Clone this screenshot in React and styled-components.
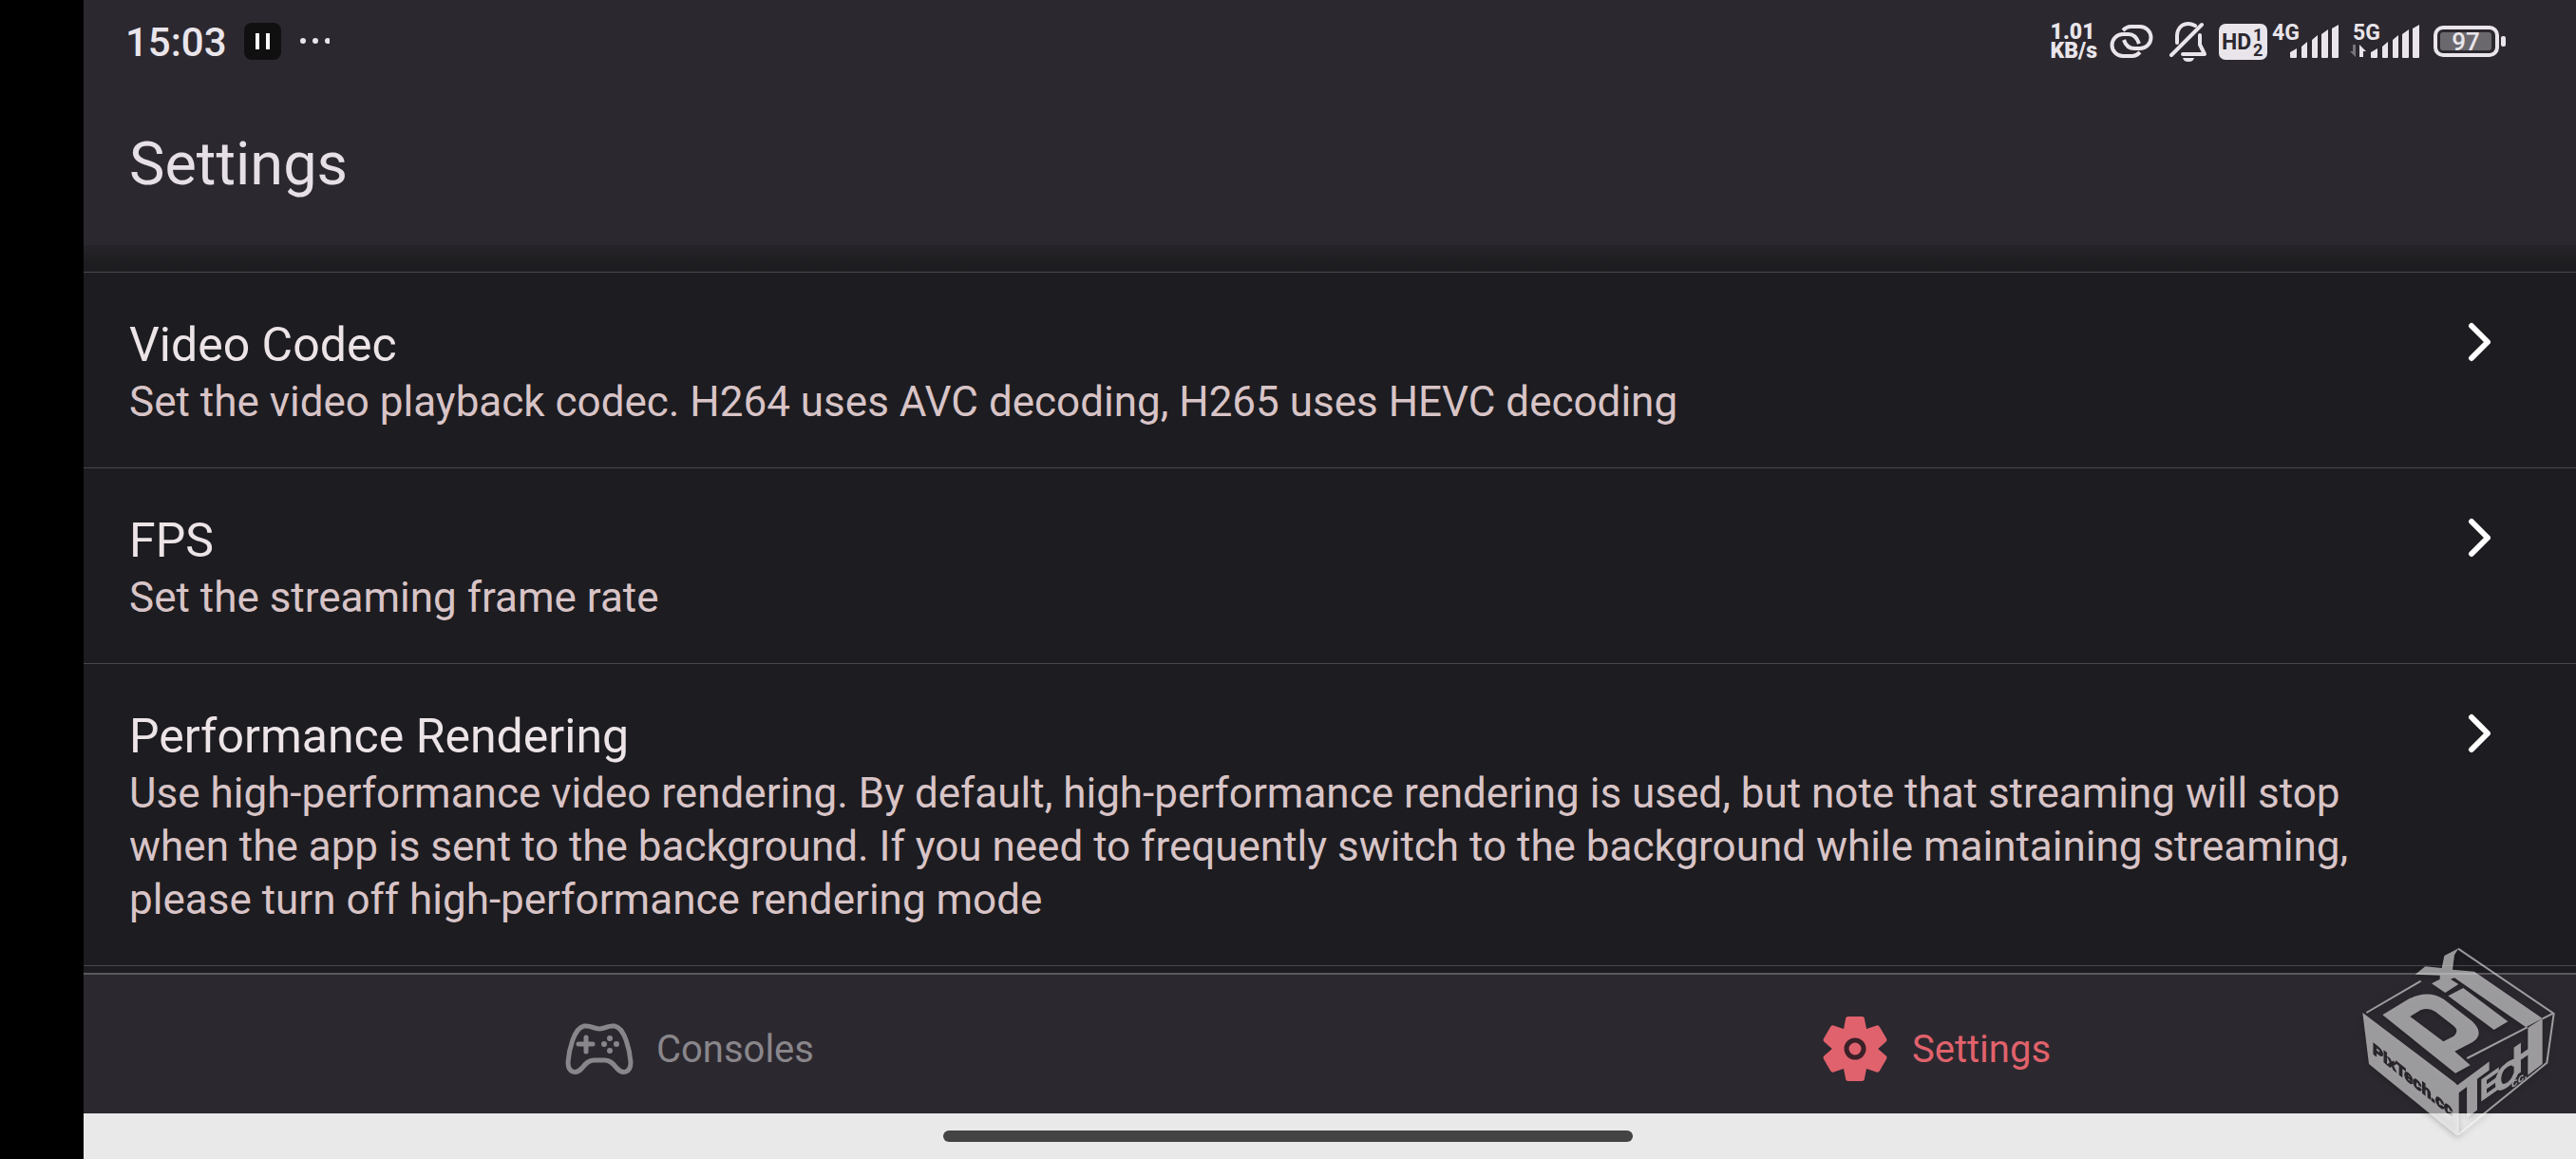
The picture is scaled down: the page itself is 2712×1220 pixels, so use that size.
import React from "react";
import styled, { createGlobalStyle } from "styled-components";

const settings = [
  {
    title: "Video Codec",
    text: "Set the video playback codec. H264 uses AVC decoding, H265 uses HEVC decoding",
  },
  { title: "FPS", text: "Set the streaming frame rate" },
  {
    title: "Performance Rendering",
    text: "Use high-performance video rendering. By default, high-performance rendering is used, but note that streaming will stop when the app is sent to the background. If you need to frequently switch to the background while maintaining streaming, please turn off high-performance rendering mode",
  },
];

function App() {
  return (
    <Screen>
      <GlobalStyle />
      <TopBar>
        <StatusBar />
        <PageTitle>Settings</PageTitle>
      </TopBar>
      <List>
        {settings.map((item) => (
          <li key={item.title}>
            <Row type="button">
              <RowText>
                <RowTitle>{item.title}</RowTitle>
                <RowDescription>{item.text}</RowDescription>
              </RowText>
              <Chevron />
            </Row>
          </li>
        ))}
      </List>
      <TabBar>
        <Tab href="#consoles">
          <GamepadIcon />
          Consoles
        </Tab>
        <Tab href="#settings" $active aria-current="page">
          <GearIcon />
          Settings
        </Tab>
      </TabBar>
      <HomeArea>
        <HomeHandle />
      </HomeArea>
      <Watermark />
    </Screen>
  );
}

function StatusBar() {
  return (
    <Status>
      <Clock>15:03</Clock>
      <svg width="90" height="40" viewBox="0 0 90 40">
        <rect x="0" y="0" width="39" height="39" rx="8" fill="#101010" />
        <path d="M12 11h4v17h-4zM23 11h4v17h-4z" fill="#fff" />
        <g fill="#e9e5eb">
          <circle cx="62" cy="19" r="3" />
          <circle cx="75" cy="19" r="3" />
          <circle cx="88" cy="19" r="3" />
        </g>
      </svg>
      <StatusIcons>
        <Speed>
          <span>1.01</span>
          <span>KB/s</span>
        </Speed>
        <LinkIcon />
        <BellOffIcon />
        <HdBadge />
        <Signal label="4G" />
        <Signal label="5G" arrows />
        <Battery />
      </StatusIcons>
    </Status>
  );
}

function LinkIcon() {
  return (
    <IconSlot $gap={13}>
      <svg width="46" height="36" viewBox="0 0 46 36" fill="none" stroke="#e9e5eb" strokeWidth="4">
        <path d="M14 6C17 3 19 2 22 2h10a11.500 11.500 0 0 1 0 23h-6c-6 0-9-3-11-9" />
        <path d="M32 29c-3 3-5 4-8 4H14a11.500 11.500 0 0 1 0-23h6c6 0 9 4 11 10" />
      </svg>
    </IconSlot>
  );
}

function BellOffIcon() {
  return (
    <IconSlot $gap={17}>
      <svg width="40" height="42" viewBox="0 0 40 42" fill="none" stroke="#e9e5eb" strokeWidth="4" strokeLinecap="round" strokeLinejoin="round">
        <path d="M2 35L34 3" />
        <path d="M8 22v-7C8 7 13 2 20 2c3 0 5 1 7 2" />
        <path d="M32 14v10l5 10H14" />
        <path d="M14 38h12c-1 3-3 4-6 4s-5-1-6-4z" fill="#e9e5eb" stroke="none" />
      </svg>
    </IconSlot>
  );
}

function HdBadge() {
  return (
    <IconSlot $gap={12}>
      <svg width="52" height="38" viewBox="0 0 52 38" fontWeight="700" fill="#2c282f">
        <rect width="51" height="38" rx="7" fill="#e9e5eb" />
        <text x="3" y="27" fontSize="23">HD</text>
        <text x="36" y="18" fontSize="18">1</text>
        <text x="36" y="34" fontSize="18">2</text>
      </svg>
    </IconSlot>
  );
}

function Signal({ label, arrows }) {
  return (
    <IconSlot $gap={arrows ? 13 : 4}>
      <svg width="72" height="38" viewBox="0 0 72 38" fill="#e9e5eb">
        <text x="0" y="17" fontWeight="700" fontSize="23">
          {label}
        </text>
        <path d="M19 30l7-4v9q0 1-1 1h-5q-1 0-1-1zM31 24l6-5v16q0 1-1 1h-4q-1 0-1-1zM42 17l6-5v23q0 1-1 1h-4q-1 0-1-1zM52 11l7-5v29q0 1-1 1h-5q-1 0-1-1zM63 5l7-4v34q0 1-1 1h-5q-1 0-1-1z" />
        {arrows && (
          <>
            <path d="M3 22v13L-3 29h3v-7z" fill="#77747a" />
            <path d="M7 35V22l7 7h-3v6z" />
          </>
        )}
      </svg>
    </IconSlot>
  );
}

function Battery() {
  return (
    <IconSlot $gap={13}>
      <svg width="77" height="34" viewBox="0 0 77 34">
        <rect x="2" y="2" width="65" height="29" rx="8" fill="none" stroke="#e9e5eb" strokeWidth="4" />
        <rect x="7" y="7" width="54" height="19" rx="3" fill="#6b686d" />
        <rect x="71" y="11" width="5" height="11" rx="2" fill="#e9e5eb" />
        <text x="34" y="26" textAnchor="middle" fontWeight="500" fontSize="26" fill="#e9e5eb">
          97
        </text>
      </svg>
    </IconSlot>
  );
}

function Chevron() {
  return (
    <ChevronIcon viewBox="0 0 24 42" aria-hidden="true">
      <path d="M4 4l17 17L4 38" fill="none" stroke="#fff" strokeWidth="6" strokeLinecap="round" strokeLinejoin="round" />
    </ChevronIcon>
  );
}

function GamepadIcon() {
  return (
    <TabIcon viewBox="0 0 72 72" aria-hidden="true">
      <path
        d="M20 12C28 11 29 15 36 15S44 11 52 12C63 14 68 38 69 50C69 62 60 63 54 56C50 51 47 48 42 48H30C25 48 22 51 18 56C12 63 3 62 3 50C4 38 9 14 20 12Z"
        fill="none"
        stroke="currentColor"
        strokeWidth="5"
      />
      <path d="M22 24v15M14 31h15" stroke="currentColor" strokeWidth="5" strokeLinecap="round" />
      <g fill="currentColor">
        <circle cx="47" cy="25" r="3" />
        <circle cx="47" cy="38" r="3" />
        <circle cx="41" cy="31" r="3" />
        <circle cx="54" cy="31" r="3" />
      </g>
    </TabIcon>
  );
}

function GearIcon() {
  return (
    <TabIcon viewBox="0 0 72 72" aria-hidden="true">
      <g fill="currentColor">
        {[0, 60, 120].map((angle) => (
          <path
            key={angle}
            transform={`rotate(${angle} 36 36)`}
            d="M29 2h14q3 0 3 3l2 10 6 7v28l-6 7-2 10q0 3-3 3H29q-3 0-3-3l-2-10-6-7V22l6-7 2-10q0-3 3-3z"
          />
        ))}
      </g>
      <circle cx="36" cy="36" r="9" fill="none" stroke="#3a2029" strokeWidth="5" />
    </TabIcon>
  );
}

function Watermark() {
  return (
    <WatermarkImage viewBox="0 0 756 720" aria-label="PixTech.cc">
      <mask id="face" maskUnits="userSpaceOnUse" x="0" y="0" width="756" height="720">
        <rect width="756" height="720" fill="#fff" />
        <text transform="matrix(1 .8 0 1 114 386)" fontSize="49" fontWeight="700" stroke="#000" strokeWidth="4">
          PixTech.cc
        </text>
      </mask>
      <g fill="#fff" opacity="0.55">
        <path mask="url(#face)" d="M82 258L374 479L386 492V645L378 645L102 420Z" />
        <path d="M340 78L385 55L372 76L366 122L435 128L650 276L598 304L372 148L360 152L385 168L343 195L300 166L326 152V140L248 137L280 112L332 117Z" />
        <path d="M352 205L400 180L541 286L497 312Z" />
        <path
          fillRule="evenodd"
          d="M145 265L230 213Q290 185 338 215L428 285Q470 325 428 352L373 380L422 424L375 449ZM232 270L265 250Q290 240 312 255L370 300Q388 315 370 332L337 349Z"
        />
        <path d="M604 305L650 276V420L604 455Z" />
        <g fontWeight="700" stroke="#fff" strokeWidth="3">
          <text transform="matrix(1 -.74 0 1 376 612)" fontSize="170" strokeWidth="8">T</text>
          <text transform="matrix(1 -.7 0 1 452 540)" fontSize="96">E</text>
          <text transform="matrix(1 -.7 0 1 498 520)" fontSize="108">C</text>
          <text transform="matrix(1 -.7 0 1 553 464)" fontSize="130">H</text>
        </g>
        <text transform="matrix(1 -.7 0 1 552 497)" fontSize="36" fontWeight="700">cc.</text>
        <path
          d="M384 56L686 261L664 416L384 643M94 258L266 158M412 402L602 304M650 277L684 260"
          fill="none"
          stroke="#fff"
          strokeWidth="6"
        />
      </g>
    </WatermarkImage>
  );
}

const GlobalStyle = createGlobalStyle`
  * {
    box-sizing: border-box;
  }
  body {
    margin: 0;
    background: #000;
    font-family: Roboto, sans-serif;
  }
`;

const Screen = styled.div`
  position: relative;
  display: flex;
  flex-direction: column;
  height: 100vh;
  padding-left: 88px;
  overflow: hidden;
  background: #000;
`;

const TopBar = styled.header`
  flex: none;
  height: 258px;
  background: #2c282f;
`;

const Status = styled.div`
  display: flex;
  align-items: center;
  height: 88px;
  padding: 0 73px 0 44px;
`;

const Clock = styled.span`
  margin-right: 18px;
  font-size: 42px;
  font-weight: 500;
  color: #e9e5eb;
`;

const StatusIcons = styled.div`
  display: flex;
  align-items: center;
  margin-left: auto;
`;

const Speed = styled.div`
  display: flex;
  flex-direction: column;
  font-size: 23px;
  font-weight: 900;
  line-height: 20px;
  color: #e9e5eb;
`;

const IconSlot = styled.span`
  display: flex;
  margin-left: ${(props) => props.$gap}px;

  svg {
    overflow: visible;
  }
`;

const PageTitle = styled.h1`
  margin: 0;
  padding-left: 48px;
  font-size: 63px;
  font-weight: 400;
  line-height: 170px;
  color: #e6e0e6;
`;

const List = styled.ul`
  flex: 1;
  min-height: 0;
  margin: 0;
  padding: 28px 0 0;
  overflow: hidden;
  list-style: none;
  background: linear-gradient(#26242a, #1d1c1f 20px, #1d1c20 28px);

  li {
    border-top: 1px solid #49474a;
  }
  li:last-child {
    border-bottom: 1px solid #49474a;
  }
`;

const Row = styled.button`
  display: flex;
  justify-content: space-between;
  width: 100%;
  padding: 44px 90px 41px 48px;
  border: 0;
  background: none;
  font-family: inherit;
  text-align: left;
`;

const RowText = styled.span`
  flex: 1;
  padding-right: 96px;
`;

const RowTitle = styled.span`
  display: block;
  font-size: 50px;
  line-height: 64px;
  color: #ece4e6;
`;

const RowDescription = styled.span`
  display: block;
  font-size: 44px;
  line-height: 56px;
  color: #d8c4c7;
`;

const ChevronIcon = styled.svg`
  flex: none;
  width: 24px;
  height: 42px;
  margin-top: 8px;
`;

const TabBar = styled.nav`
  display: flex;
  flex: none;
  height: 148px;
  border-top: 2px solid #5c595e;
  background: #2c282f;
`;

const Tab = styled.a`
  display: flex;
  flex: 1;
  align-items: center;
  justify-content: center;
  gap: 24px;
  padding: 10px 36px 0 0;
  font-size: 40px;
  color: ${(props) => (props.$active ? "#e0626c" : "#89868b")};
  text-decoration: none;
`;

const TabIcon = styled.svg`
  width: 72px;
  height: 72px;
`;

const HomeArea = styled.div`
  display: flex;
  flex: none;
  justify-content: center;
  height: 48px;
  padding: 18px 88px 0 0;
  background: #e9e9e9;
`;

const HomeHandle = styled.div`
  width: 726px;
  height: 12px;
  border-radius: 6px;
  background: #434343;
`;

const WatermarkImage = styled.svg`
  position: absolute;
  right: 0;
  bottom: 0;
  width: 252px;
  height: 240px;
  font-family: "Liberation Sans Narrow", "Liberation Sans", sans-serif;
  filter: drop-shadow(0 2px 3px rgba(0, 0, 0, 0.4));
  pointer-events: none;
`;

export default App;
